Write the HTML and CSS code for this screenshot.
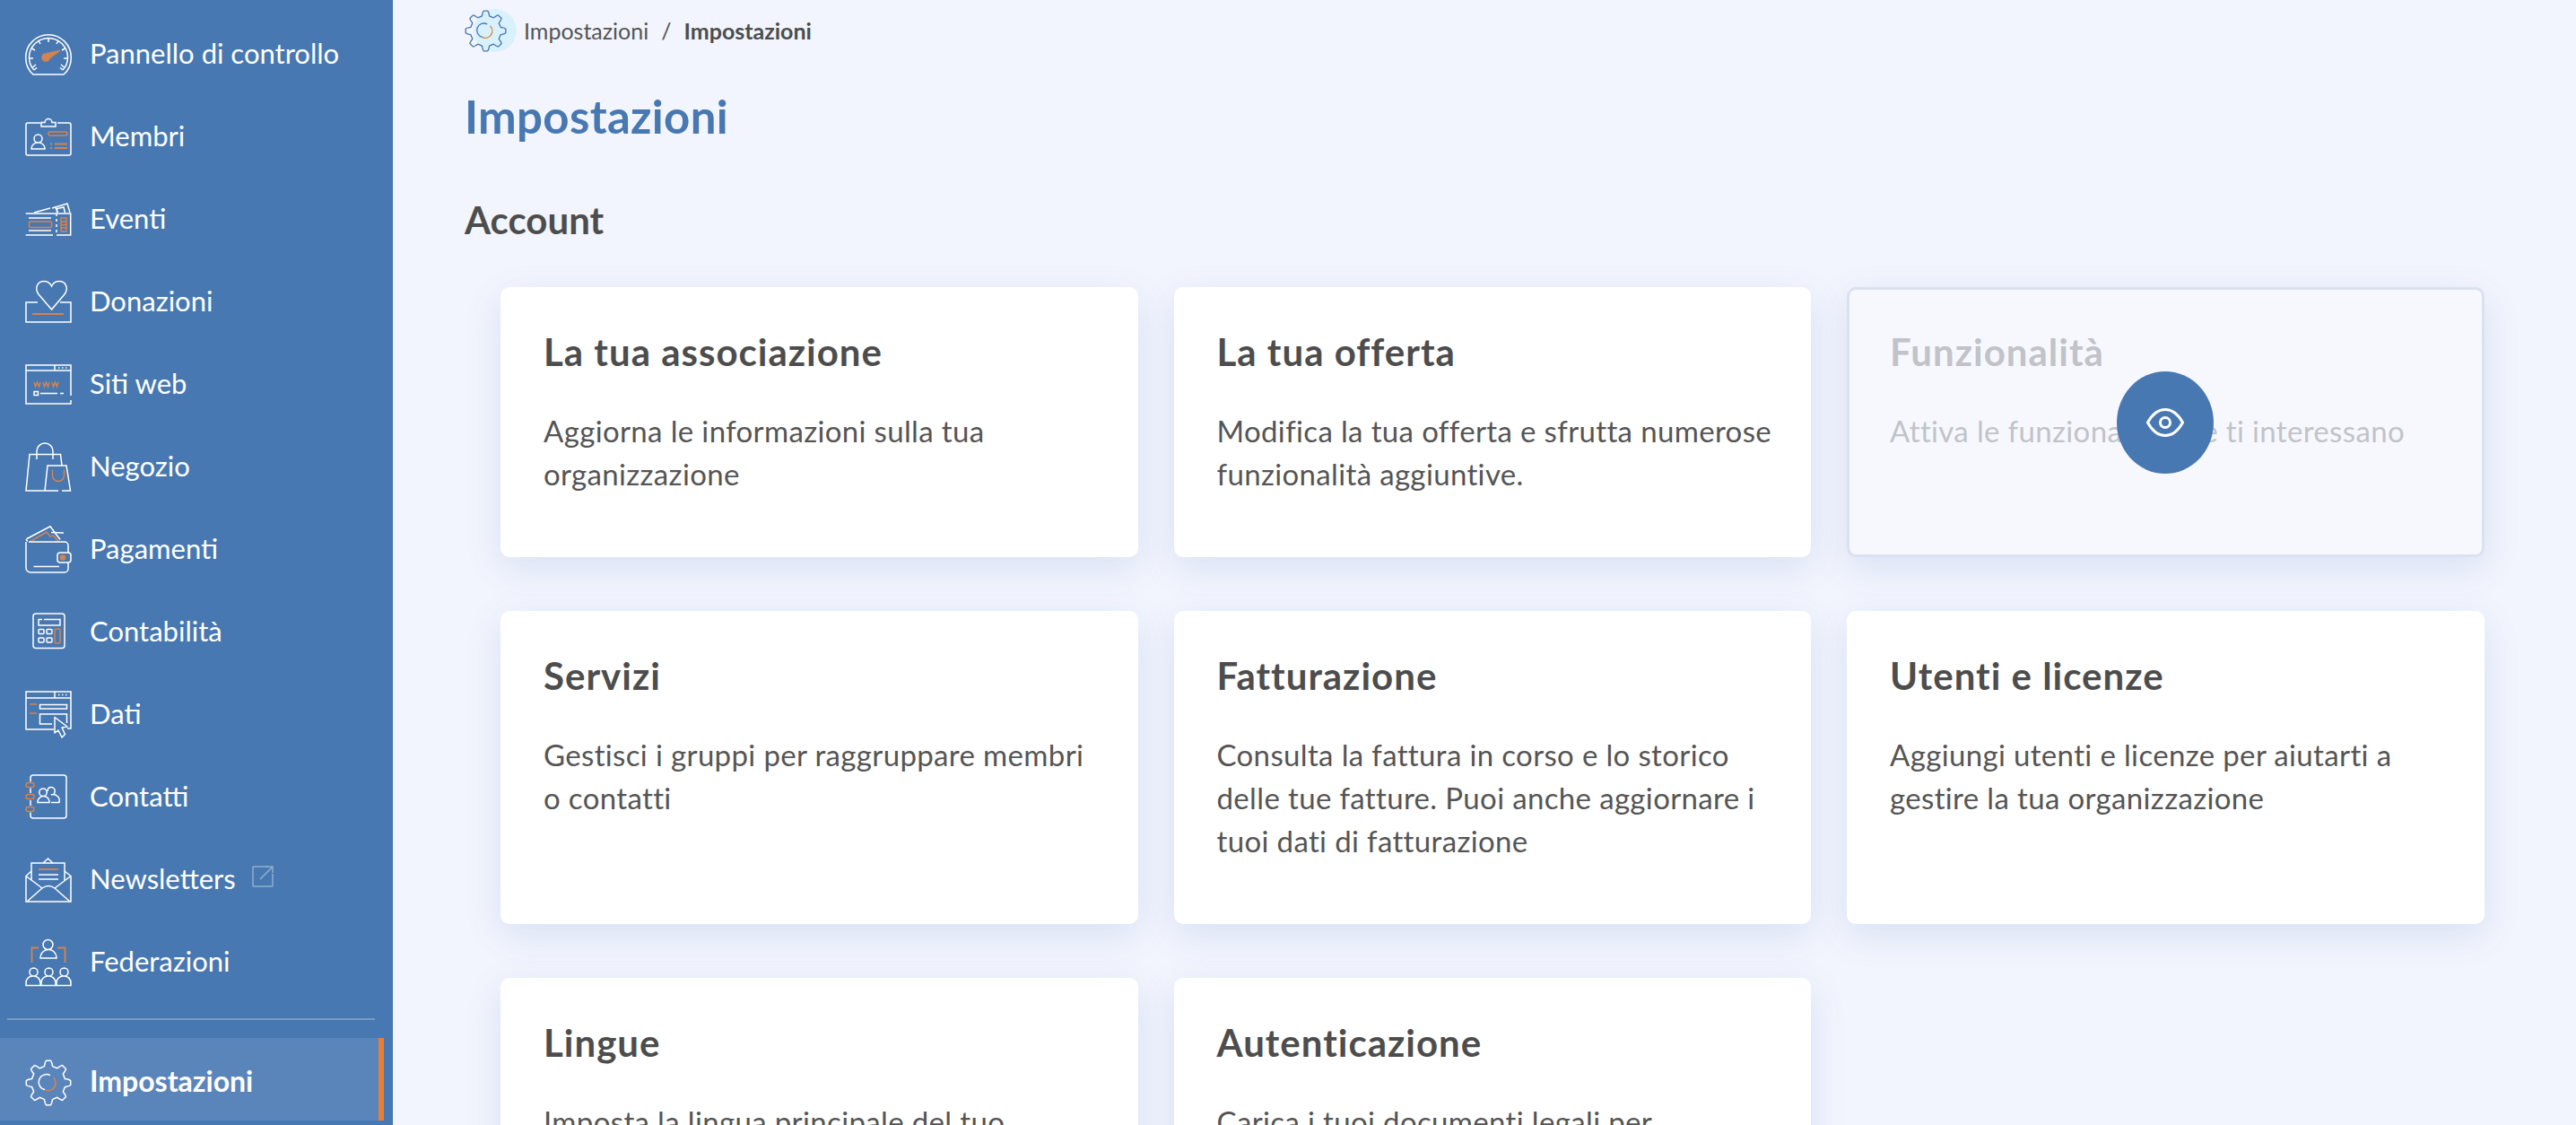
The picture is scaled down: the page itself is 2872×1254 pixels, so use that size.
FILE: index.html
```html
<!DOCTYPE html>
<html lang="it">
<head>
    <meta charset="UTF-8">
    <title>Impostazioni</title>
    <link rel="stylesheet" href="styles.css">
</head>
<body>
<svg class="defs" width="0" height="0">
    <symbol id="gear" viewBox="0 0 52 52">
        <path d="M21.4 7.6C22 5 22 3 23.5 1.3H28.5C30 3 30 5 30.6 7.6L35.8 9.7C38 8.3 39.5 6.8 41.5 6.5L45.5 10.5C45.2 12.5 43.7 14 42.3 16.2L44.4 21.4C47 22 49 22 50.7 23.5V28.5C49 30 47 30 44.4 30.6L42.3 35.8C43.7 38 45.2 39.5 45.5 41.5L41.5 45.5C39.5 45.2 38 43.7 35.8 42.3L30.6 44.4C30 47 30 49 28.5 50.7H23.5C22 49 22 47 21.4 44.4L16.2 42.3C14 43.7 12.5 45.2 10.5 45.5L6.5 41.5C6.8 39.5 8.3 38 9.7 35.8L7.6 30.6C5 30 3 30 1.3 28.5V23.5C3 22 5 22 7.6 21.4L9.7 16.2C8.3 14 6.8 12.5 6.5 10.5L10.5 6.5C12.5 6.8 14 8.3 16.2 9.7Z" fill="none" stroke="currentColor" stroke-width="1.5" stroke-linejoin="round"/>
        <path d="M28 17.700A8.600 8.600 0 1 0 22 33.600" fill="none" stroke="currentColor" stroke-width="1.500"/>
        <path d="M31.500 20A8.600 8.600 0 0 1 22 34" fill="none" stroke="#e0813f" stroke-width="1.500"/>
    </symbol>
</svg>

<div class="layout">
    <nav class="sidebar">
        <a class="nav-item">
            <svg class="nav-icon" viewBox="0 0 52 52">
                <path d="M9 49C3 44 .7 38 .7 30A25.300 25.300 0 0 1 51.300 30C51.300 38 49 44 43 49Z"/>
                <path d="M10 44C6 40 4.500 35 4.500 30A21.500 21.500 0 0 1 47.500 30C47.500 35 46 40 42 44"/>
                <path d="M26 8.500V13M15 11.500L17 15M37 11.500L35 15M7.500 20L11 22M44.500 20L41 22M4.500 31H9M47.500 31H43M8.500 41L12 38M43.500 41L40 38M10 44L13 41.500M42 44L39 41.500"/>
                <path class="acc fill" d="M23 26L38.500 22.500L27 31A4 4 0 1 1 23 26Z"/>
            </svg>
            <span>Pannello di controllo</span>
        </a>
        <a class="nav-item">
            <svg class="nav-icon" viewBox="0 0 52 52">
                <path d="M17 11H3A2 2 0 0 0 1 13V45A2 2 0 0 0 3 47H49A2 2 0 0 0 51 45V13A2 2 0 0 0 49 11H36"/>
                <path d="M18 15V10.500H22A4 4 0 0 1 30 10.500H34V15Z"/>
                <path d="M14.500 24A4.500 4.500 0 0 1 14.500 33A7 7 0 0 0 7 39V40H22V39A7 7 0 0 0 14.500 33A4.500 4.500 0 0 1 14.500 24Z"/>
                <rect class="acc" x="26" y="21" width="21" height="4" rx="2"/>
                <path class="acc" d="M33 34.500H47M33 39H47M28 34.500H30M28 39H30" stroke-width="1.800"/>
            </svg>
            <span>Membri</span>
        </a>
        <a class="nav-item">
            <svg class="nav-icon" viewBox="0 0 52 52">
                <path d="M10 19L28 14M30 14L47 9L50 19M36 19L34 13"/>
                <path d="M36 19L35.500 14.500L43 13L44.500 19"/>
                <path d="M.7 20H50.700V44H35M31 44H.7Z"/>
                <path d="M35 20V44" stroke-dasharray="3 3"/>
                <path d="M4 25H29M4 39H29"/>
                <rect class="acc" x="4.500" y="29" width="25" height="6.500" rx="1"/>
                <rect class="acc" x="40" y="25" width="6" height="15"/>
                <path class="acc" d="M40 29H46M40 32.500H46M40 36H46"/>
            </svg>
            <span>Eventi</span>
        </a>
        <a class="nav-item">
            <svg class="nav-icon" viewBox="0 0 52 52">
                <path d="M14 27H1V49H51V27H39"/>
                <path d="M29.500 35L15 18C10 11 14 3.500 21 3.500C25 3.500 28 6 29.500 9C31 6 34 3.500 38 3.500C45 3.500 49 11 44 18Z"/>
                <path class="acc" d="M8 40H43" stroke-width="2"/>
            </svg>
            <span>Donazioni</span>
        </a>
        <a class="nav-item">
            <svg class="nav-icon" viewBox="0 0 52 52">
                <path d="M51 39V5H1V48H51V44"/>
                <path d="M1 11H51M33 5V11M37 8H38.500M41 8H42.500M45 8H46.500"/>
                <path class="acc" d="M10 24L11.500 29L13.500 24L15.500 29L17 24M20 24L21.500 29L23.500 24L25.500 29L27 24M30 24L31.500 29L33.500 24L35.500 29L37 24"/>
                <rect x="10" y="34.500" width="4.500" height="4"/>
                <path d="M17 36.500H36M39 36.500H43"/>
            </svg>
            <span>Siti web</span>
        </a>
        <a class="nav-item">
            <svg class="nav-icon" viewBox="0 0 52 52">
                <path d="M22 53H1L5 12.500H39.500L41 25"/>
                <path d="M13 18V9A9 9 0 0 1 31 9V18"/>
                <path d="M22 53L25 25H46L50.500 53H41M37 53H22"/>
                <path class="acc" d="M30.500 29.500V36A6.500 6.500 0 0 0 43.500 36V29.500" stroke-width="1.500"/>
            </svg>
            <span>Negozio</span>
        </a>
        <a class="nav-item">
            <svg class="nav-icon" viewBox="0 0 52 52">
                <path d="M2 14.500L28 .8L39 15.500M29 7.500L43 8M2 14.500C.5 16 2 17 3 17"/>
                <path class="acc" d="M6 17.500L24 7L28 12L32 11L37 18" stroke-width="1.500"/>
                <path d="M1 18V47A5 5 0 0 0 6 52H44A4 4 0 0 0 48 48V41M48 30V22A4 4 0 0 0 44 18H4"/>
                <rect x="36" y="30" width="15" height="11" rx="3"/>
                <circle class="acc fill" cx="42" cy="35.500" r="2.500"/>
                <path d="M9.500 45.500H38"/>
            </svg>
            <span>Pagamenti</span>
        </a>
        <a class="nav-item">
            <svg class="nav-icon" viewBox="0 0 52 52">
                <rect x="9" y="6" width="35" height="38.500" rx="3"/>
                <path d="M19 12.500H15V19H39V12.500H21"/>
                <rect x="15" y="23.500" width="6" height="5" rx="1"/>
                <rect x="24" y="23.500" width="6" height="5" rx="1"/>
                <rect x="15" y="33" width="6" height="5" rx="1"/>
                <rect x="24" y="33" width="6" height="5" rx="1"/>
                <rect class="acc" x="33" y="23" width="6" height="16" rx="1.500" stroke-width="1.500"/>
            </svg>
            <span>Contabilità</span>
        </a>
        <a class="nav-item">
            <svg class="nav-icon" viewBox="0 0 52 52">
                <path d="M32 43H1V1H51V42H47"/>
                <path d="M1 8H51M33 1V8M37 4.500H38.500M41 4.500H42.500M45 4.500H46.500"/>
                <path class="acc" d="M5 15H13M5 25H13"/>
                <rect x="16.500" y="15.500" width="30" height="4.500"/>
                <path d="M30 37H16.500V26H46.500V36"/>
                <path d="M33 29.500L47 40L41 41L44.500 48.500L41 52L37 44L33 47Z" stroke-linejoin="round"/>
            </svg>
            <span>Dati</span>
        </a>
        <a class="nav-item">
            <svg class="nav-icon" viewBox="0 0 52 52">
                <path d="M6 9.500V5A3 3 0 0 1 9 2H43A3 3 0 0 1 46 5V47A3 3 0 0 1 43 50H9A3 3 0 0 1 6 47V43.500M6 36V30M6 22V16.500"/>
                <rect class="acc" x="1" y="10.500" width="9" height="5" rx="2.500"/>
                <rect class="acc" x="1" y="23.500" width="9" height="5" rx="2.500"/>
                <rect class="acc" x="1" y="37.500" width="9" height="5" rx="2.500"/>
                <path d="M20 17A4 4 0 0 1 20 25.500A6.500 6.500 0 0 0 14 32.500H27V31A6.500 6.500 0 0 0 20 25.500A4 4 0 0 1 20 17Z"/>
                <path d="M29 15.500A4 4 0 0 1 29 24A7 7 0 0 1 38 32.500H29M25 20C25 17 27 15.500 29 15.500"/>
            </svg>
            <span>Contatti</span>
        </a>
        <a class="nav-item">
            <svg class="nav-icon" viewBox="0 0 52 52">
                <path d="M7 27V8H44V27M20 8L25.500 3L31 8"/>
                <path d="M7 17L1 22.500V51H51V22.500L44 17"/>
                <path d="M1 22.500L19 36M51 22.500L33 36M2 51L19 36Q26 31 33 36L50 51"/>
                <path class="acc" d="M15 15H37" stroke-width="1.800"/>
                <path d="M15 21H37M15 26H37"/>
            </svg>
            <span>Newsletters</span>
            <svg class="ext-icon" viewBox="0 0 24 24">
                <path d="M17 1H2A1 1 0 0 0 1 2V22A1 1 0 0 0 2 23H22A1 1 0 0 0 23 22V9"/>
                <path d="M9 15L23 1M16 1H23V8"/>
            </svg>
        </a>
        <a class="nav-item">
            <svg class="nav-icon" viewBox="0 0 52 52">
                <path class="acc" d="M15 10.500H7.500V27M36 10.500H44.500V27" stroke-width="1.800"/>
                <path d="M25.500 1.500A5.500 5.500 0 0 1 25.500 12.500A9 9 0 0 0 17 22H35V21A9 9 0 0 0 25.500 12.500A5.500 5.500 0 0 1 25.500 1.500Z"/>
                <g id="fed-person">
                    <path d="M9.500 33A4.500 4.500 0 0 1 9.500 42A7.500 7.500 0 0 0 1 50V52.500H17V50A7.500 7.500 0 0 0 9.500 42A4.500 4.500 0 0 1 9.500 33Z"/>
                </g>
                <use href="#fed-person" x="17"/>
                <use href="#fed-person" x="34"/>
            </svg>
            <span>Federazioni</span>
        </a>
        <div class="nav-divider"></div>
        <a class="nav-item active">
            <svg class="nav-icon"><use href="#gear"/></svg>
            <span>Impostazioni</span>
        </a>
    </nav>

    <main class="content">
        <div class="breadcrumb">
            <span class="crumb-icon">
                <svg class="crumb-gear"><use href="#gear"/></svg>
            </span>
            <span>Impostazioni</span>
            <span class="crumb-sep">/</span>
            <b>Impostazioni</b>
        </div>
        <h1 class="page-title">Impostazioni</h1>
        <h2 class="section-title">Account</h2>

        <div class="cards">
            <div class="card">
                <h3>La tua associazione</h3>
                <p>Aggiorna le informazioni sulla tua organizzazione</p>
            </div>
            <div class="card">
                <h3>La tua offerta</h3>
                <p>Modifica la tua offerta e sfrutta numerose funzionalità aggiuntive.</p>
            </div>
            <div class="card disabled">
                <h3>Funzionalità</h3>
                <p>Attiva le funzionalità che ti interessano</p>
                <span class="eye-btn">
                    <svg viewBox="0 0 42 32" width="42" height="32">
                        <path d="M1.500 16C7 6 13 1.500 21 1.500S35 6 40.500 16C35 26 29 30.500 21 30.500S7 26 1.500 16Z"/>
                        <circle cx="21" cy="16" r="5.500"/>
                    </svg>
                </span>
            </div>
            <div class="card">
                <h3>Servizi</h3>
                <p>Gestisci i gruppi per raggruppare membri o contatti</p>
            </div>
            <div class="card">
                <h3>Fatturazione</h3>
                <p>Consulta la fattura in corso e lo storico delle tue fatture. Puoi anche aggiornare i tuoi dati di fatturazione</p>
            </div>
            <div class="card">
                <h3>Utenti e licenze</h3>
                <p>Aggiungi utenti e licenze per aiutarti a gestire la tua organizzazione</p>
            </div>
            <div class="card">
                <h3>Lingue</h3>
                <p>Imposta la lingua principale del tuo</p>
            </div>
            <div class="card">
                <h3>Autenticazione</h3>
                <p>Carica i tuoi documenti legali per</p>
            </div>
        </div>
    </main>
</div>
</body>
</html>
```

FILE: styles.css
```css
* {
    box-sizing: border-box;
}

html, body {
    height: 100%;
    margin: 0;
    overflow: hidden;
}

body {
    font-family: "Lato", "Noto Sans", sans-serif;
    background-color: #f2f5fd;
    color: #4d4d4d;
}

.defs {
    display: block;
    height: 0;
}

.layout {
    display: flex;
    height: 1254px;
}

/* sidebar */
.sidebar {
    width: 438px;
    flex-shrink: 0;
    height: 100%;
    padding-top: 14px;
    background-color: #4878b1;
    overflow: hidden;
}

.nav-item {
    display: flex;
    align-items: center;
    height: 92px;
    padding-left: 28px;
    color: #fff;
    font-size: 31px;
}

.nav-item span {
    margin-top: -3px;
}

.nav-icon {
    width: 52px;
    height: 52px;
    margin-right: 20px;
    flex-shrink: 0;
    overflow: visible;
    fill: none;
    stroke: #fff;
    stroke-width: 1.5;
    color: #fff;
}

.nav-icon .acc {
    stroke: #d5834f;
}

.nav-icon .fill {
    fill: #d5834f;
}

.ext-icon {
    width: 24px;
    height: 24px;
    margin-left: 18px;
    margin-top: -6px;
    fill: none;
    stroke: rgba(255, 255, 255, 0.4);
    stroke-width: 1.5;
}

.nav-divider {
    height: 2px;
    width: 410px;
    margin: 17px 0 20px 8px;
    background-color: rgba(255, 255, 255, 0.25);
}

.nav-item.active {
    width: 428px;
    background-color: #5a85bb;
    border-right: 6px solid #ed7d31;
    font-size: 32px;
    font-weight: 700;
}

.nav-item.active .nav-icon {
    margin-top: 8px;
}

.nav-item.active span {
    margin-top: 2px;
}

/* content */
.content {
    flex: 1;
    padding: 10px 103px 0 80px;
}

.breadcrumb {
    display: flex;
    align-items: center;
    height: 48px;
    font-size: 25px;
    color: #555;
}

.crumb-icon {
    width: 58px;
    height: 48px;
    margin-right: 8px;
    display: flex;
    align-items: center;
    background: radial-gradient(circle 24px at 34px 24px, #d9f1fc 98%, transparent 100%);
}

.crumb-gear {
    width: 47px;
    height: 47px;
    color: #4878b1;
}

.crumb-sep {
    margin: 0 14px;
}

.breadcrumb b {
    color: #4d4d4d;
    font-weight: 700;
}

.page-title {
    margin: 40px 0 0;
    height: 64px;
    line-height: 64px;
    font-size: 51px;
    letter-spacing: 0.3px;
    font-weight: 700;
    color: #4878b1;
}

.section-title {
    margin: 54px 0 0;
    height: 58px;
    line-height: 58px;
    font-size: 42px;
    font-weight: 700;
    color: #4d4d4d;
}

.cards {
    display: grid;
    grid-template-columns: repeat(3, 710.5px);
    column-gap: 40px;
    row-gap: 60px;
    margin: 46px 0 0 40px;
}

.card {
    position: relative;
    min-height: 301px;
    padding: 46px 40px 69px 48px;
    background-color: #fff;
    border-radius: 10px;
    box-shadow: 0 12px 40px rgba(70, 100, 190, 0.14);
}

.card h3 {
    margin: 0;
    height: 52px;
    line-height: 52px;
    font-size: 42px;
    letter-spacing: 1px;
    font-weight: 700;
    color: #4d4d4d;
}

.card p {
    margin: 38px 0 0;
    line-height: 48px;
    font-size: 33px;
    letter-spacing: 0.35px;
    color: #555;
}

.card.disabled {
    padding: 43px 37px 66px 45px;
    background-color: #f7f8fe;
    border: 3px solid #dbe1f0;
}

.card.disabled h3,
.card.disabled p {
    color: #c1c3c9;
}

.eye-btn {
    position: absolute;
    left: 298px;
    top: 91px;
    width: 108px;
    height: 114px;
    display: flex;
    align-items: center;
    justify-content: center;
    border-radius: 50%;
    background-color: #4878b1;
}

.eye-btn svg {
    fill: none;
    stroke: #fff;
    stroke-width: 3;
}
```
